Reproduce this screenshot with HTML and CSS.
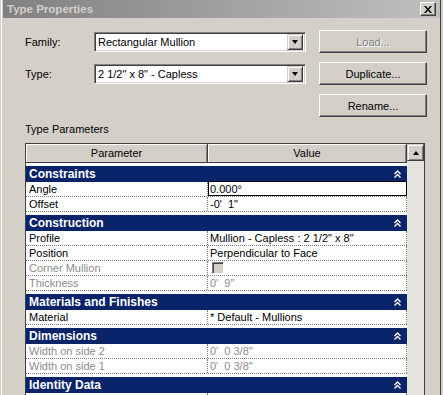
FILE: index.html
```html
<!DOCTYPE html>
<html lang="en">
  <head>
    <meta charset="UTF-8" />
    <meta name="viewport" content="width=device-width, initial-scale=1.0" />
    <title>Type Properties</title>
    <link rel="stylesheet" href="styles.css">
  </head>
  <body>
    <div class="window">
      <!-- Title bar -->
      <div class="titlebar">
        <span class="title">Type Properties</span>
        <button class="close" type="button">
          <svg width="8" height="7" viewBox="0 0 8 7">
            <path d="M0 0 L2 0 L4 2.5 L6 0 L8 0 L5 3.5 L8 7 L6 7 L4 4.5 L2 7 L0 7 L3 3.5 Z" fill="#000" />
          </svg>
        </button>
      </div>

      <div class="dialog">
        <!-- Family / type pickers -->
        <div class="form">
          <span class="label">Family:</span>
          <div class="combo">
            <span class="combo-text">Rectangular Mullion</span>
            <span class="combo-btn"><i class="arrow-down"></i></span>
          </div>
          <button class="btn" type="button" disabled>Load...</button>

          <span class="label">Type:</span>
          <div class="combo">
            <span class="combo-text">2 1/2" x 8" - Capless</span>
            <span class="combo-btn"><i class="arrow-down"></i></span>
          </div>
          <button class="btn" type="button">Duplicate...</button>

          <span></span>
          <span></span>
          <button class="btn" type="button">Rename...</button>
        </div>

        <div class="section-label">Type Parameters</div>

        <!-- Property grid -->
        <div class="grid">
          <div class="grid-main">
            <div class="grid-head">
              <div class="head-cell name-col">Parameter</div>
              <div class="head-cell value-col">Value</div>
            </div>

            <div class="group">
              <div class="band">Constraints<svg class="chev" width="7" height="8" viewBox="0 0 7 8"><path d="M0.5 4 L3.5 1 L6.5 4 M0.5 7.5 L3.5 4.5 L6.5 7.5" stroke="#fff" stroke-width="1.4" fill="none" /></svg></div>
              <div class="row"><div class="name">Angle</div><div class="value selected">0.000°</div></div>
              <div class="row"><div class="name">Offset</div><div class="value">-0'&nbsp; 1"</div></div>
            </div>

            <div class="group">
              <div class="band">Construction<svg class="chev" width="7" height="8" viewBox="0 0 7 8"><path d="M0.5 4 L3.5 1 L6.5 4 M0.5 7.5 L3.5 4.5 L6.5 7.5" stroke="#fff" stroke-width="1.4" fill="none" /></svg></div>
              <div class="row"><div class="name">Profile</div><div class="value">Mullion - Capless : 2 1/2" x 8"</div></div>
              <div class="row"><div class="name">Position</div><div class="value">Perpendicular to Face</div></div>
              <div class="row disabled"><div class="name">Corner Mullion</div><div class="value"><span class="checkbox"></span></div></div>
              <div class="row disabled"><div class="name">Thickness</div><div class="value">0'&nbsp; 9"</div></div>
            </div>

            <div class="group">
              <div class="band">Materials and Finishes<svg class="chev" width="7" height="8" viewBox="0 0 7 8"><path d="M0.5 4 L3.5 1 L6.5 4 M0.5 7.5 L3.5 4.5 L6.5 7.5" stroke="#fff" stroke-width="1.4" fill="none" /></svg></div>
              <div class="row"><div class="name">Material</div><div class="value">* Default - Mullions</div></div>
            </div>

            <div class="group">
              <div class="band">Dimensions<svg class="chev" width="7" height="8" viewBox="0 0 7 8"><path d="M0.5 4 L3.5 1 L6.5 4 M0.5 7.5 L3.5 4.5 L6.5 7.5" stroke="#fff" stroke-width="1.4" fill="none" /></svg></div>
              <div class="row disabled"><div class="name">Width on side 2</div><div class="value">0'&nbsp; 0 3/8"</div></div>
              <div class="row disabled"><div class="name">Width on side 1</div><div class="value">0'&nbsp; 0 3/8"</div></div>
            </div>

            <div class="group">
              <div class="band">Identity Data<svg class="chev" width="7" height="8" viewBox="0 0 7 8"><path d="M0.5 4 L3.5 1 L6.5 4 M0.5 7.5 L3.5 4.5 L6.5 7.5" stroke="#fff" stroke-width="1.4" fill="none" /></svg></div>
              <div class="row"><div class="name"></div><div class="value"></div></div>
            </div>
          </div>

          <div class="scrollbar">
            <div class="scroll-btn"><i class="arrow-up"></i></div>
            <div class="track"></div>
          </div>
        </div>
      </div>
    </div>
  </body>
</html>
```

FILE: styles.css
```css
* {
  margin: 0;
  padding: 0;
  box-sizing: border-box;
}

body {
  background: #d4d0c8;
  font-family: "Liberation Sans", Arial, sans-serif;
  font-size: 11px;
  color: #000;
  overflow: hidden;
}

.window {
  width: 441px;
  height: 395px;
  overflow: hidden;
  background: #d4d0c8;
  border-left: 1px solid #d4d0c8;
  border-right: 1px solid #404040;
  box-shadow: inset 1px 0 #fff;
  padding-left: 2px;
}

/* Title bar */
.titlebar {
  height: 18px;
  display: flex;
  align-items: center;
  justify-content: space-between;
  padding: 0 4px 0 4px;
  background: linear-gradient(to right, #808080, #c0c0c0);
}

.title {
  color: #d4d0c8;
  font-weight: bold;
  font-size: 11.5px;
}

.close {
  width: 16px;
  height: 14px;
  display: flex;
  align-items: center;
  justify-content: center;
  background: #d4d0c8;
  border: 1px solid;
  border-color: #fff #404040 #404040 #fff;
  box-shadow: inset -1px -1px #808080;
}

/* Top form */
.dialog {
  padding: 12px 0 0 22px;
}

.form {
  display: grid;
  grid-template-columns: 56px 212px 108px;
  grid-auto-rows: 23px;
  column-gap: 13px;
  row-gap: 9px;
  align-items: center;
}

.combo {
  height: 20px;
  display: flex;
  align-items: center;
  background: #fff;
  border: 1px solid;
  border-color: #808080 #fff #fff #808080;
  box-shadow: inset 1px 1px #404040, inset -1px -1px #d4d0c8;
  padding: 2px;
}

.combo-text {
  flex: 1;
  padding-left: 1px;
}

.combo-btn {
  width: 16px;
  height: 16px;
  display: flex;
  align-items: center;
  justify-content: center;
  background: #d4d0c8;
  border: 1px solid;
  border-color: #d4d0c8 #404040 #404040 #d4d0c8;
  box-shadow: inset 1px 1px #fff, inset -1px -1px #808080;
}

.arrow-down {
  width: 0;
  height: 0;
  border-left: 3.5px solid transparent;
  border-right: 3.5px solid transparent;
  border-top: 4px solid #000;
}

.arrow-up {
  width: 0;
  height: 0;
  border-left: 3.5px solid transparent;
  border-right: 3.5px solid transparent;
  border-bottom: 4px solid #000;
}

.btn {
  height: 23px;
  font-family: inherit;
  font-size: 11px;
  color: #000;
  background: #d4d0c8;
  border: 1px solid;
  border-color: #fff #404040 #404040 #fff;
  box-shadow: inset -1px -1px #808080;
}

.btn:disabled {
  color: #808080;
  text-shadow: 1px 1px #fff;
}

.section-label {
  margin-top: 6px;
  line-height: 13px;
  margin-bottom: 7px;
}

/* Property grid */
.grid {
  width: 400px;
  height: 260px;
  display: flex;
  border: 1px solid #404040;
  background: #fff;
  font-size: 11px;
}

.grid-main {
  width: 381px;
}

.grid-head {
  display: flex;
  height: 19px;
  background: #d4d0c8;
  border-bottom: 1px solid #404040;
}

.head-cell {
  display: flex;
  align-items: center;
  justify-content: center;
  border-right: 1px solid #404040;
  box-shadow: inset 1px 1px #fff, inset -1px 0 #808080;
}

.name-col {
  width: 182px;
}

.value-col {
  width: 199px;
}

.group {
  margin-top: 3px;
}

.band {
  height: 16px;
  display: flex;
  align-items: center;
  justify-content: space-between;
  padding: 0 6px 0 3px;
  background: #0a246a;
  color: #fff;
  font-weight: bold;
  font-size: 12px;
}

.row {
  display: flex;
  height: 15px;
  border-bottom: 1px dotted #808080;
}

.row .name {
  width: 182px;
  padding-left: 3px;
  border-right: 1px dotted #808080;
  line-height: 14px;
  white-space: nowrap;
}

.row .value {
  width: 199px;
  padding-left: 2px;
  border-right: 1px dotted #808080;
  line-height: 14px;
  white-space: nowrap;
  display: flex;
  align-items: center;
}

.row .value.selected {
  border: 1px solid #000;
  padding-left: 1px;
  height: 15px;
  margin-top: -1px;
}

.row.disabled {
  color: #8c8c8c;
}

.checkbox {
  width: 12px;
  height: 12px;
  margin-left: 2px;
  background: #d4d0c8;
  border: 1px solid;
  border-color: #808080 #fff #fff #808080;
  box-shadow: inset 1px 1px #404040;
}

.scrollbar {
  width: 17px;
  display: flex;
  flex-direction: column;
  background: #e6e4df;
}

.scroll-btn {
  height: 17px;
  display: flex;
  align-items: center;
  justify-content: center;
  background: #d4d0c8;
  border: 1px solid;
  border-color: #d4d0c8 #404040 #404040 #d4d0c8;
  box-shadow: inset 1px 1px #fff, inset -1px -1px #808080;
}

.track {
  flex: 1;
}
```
